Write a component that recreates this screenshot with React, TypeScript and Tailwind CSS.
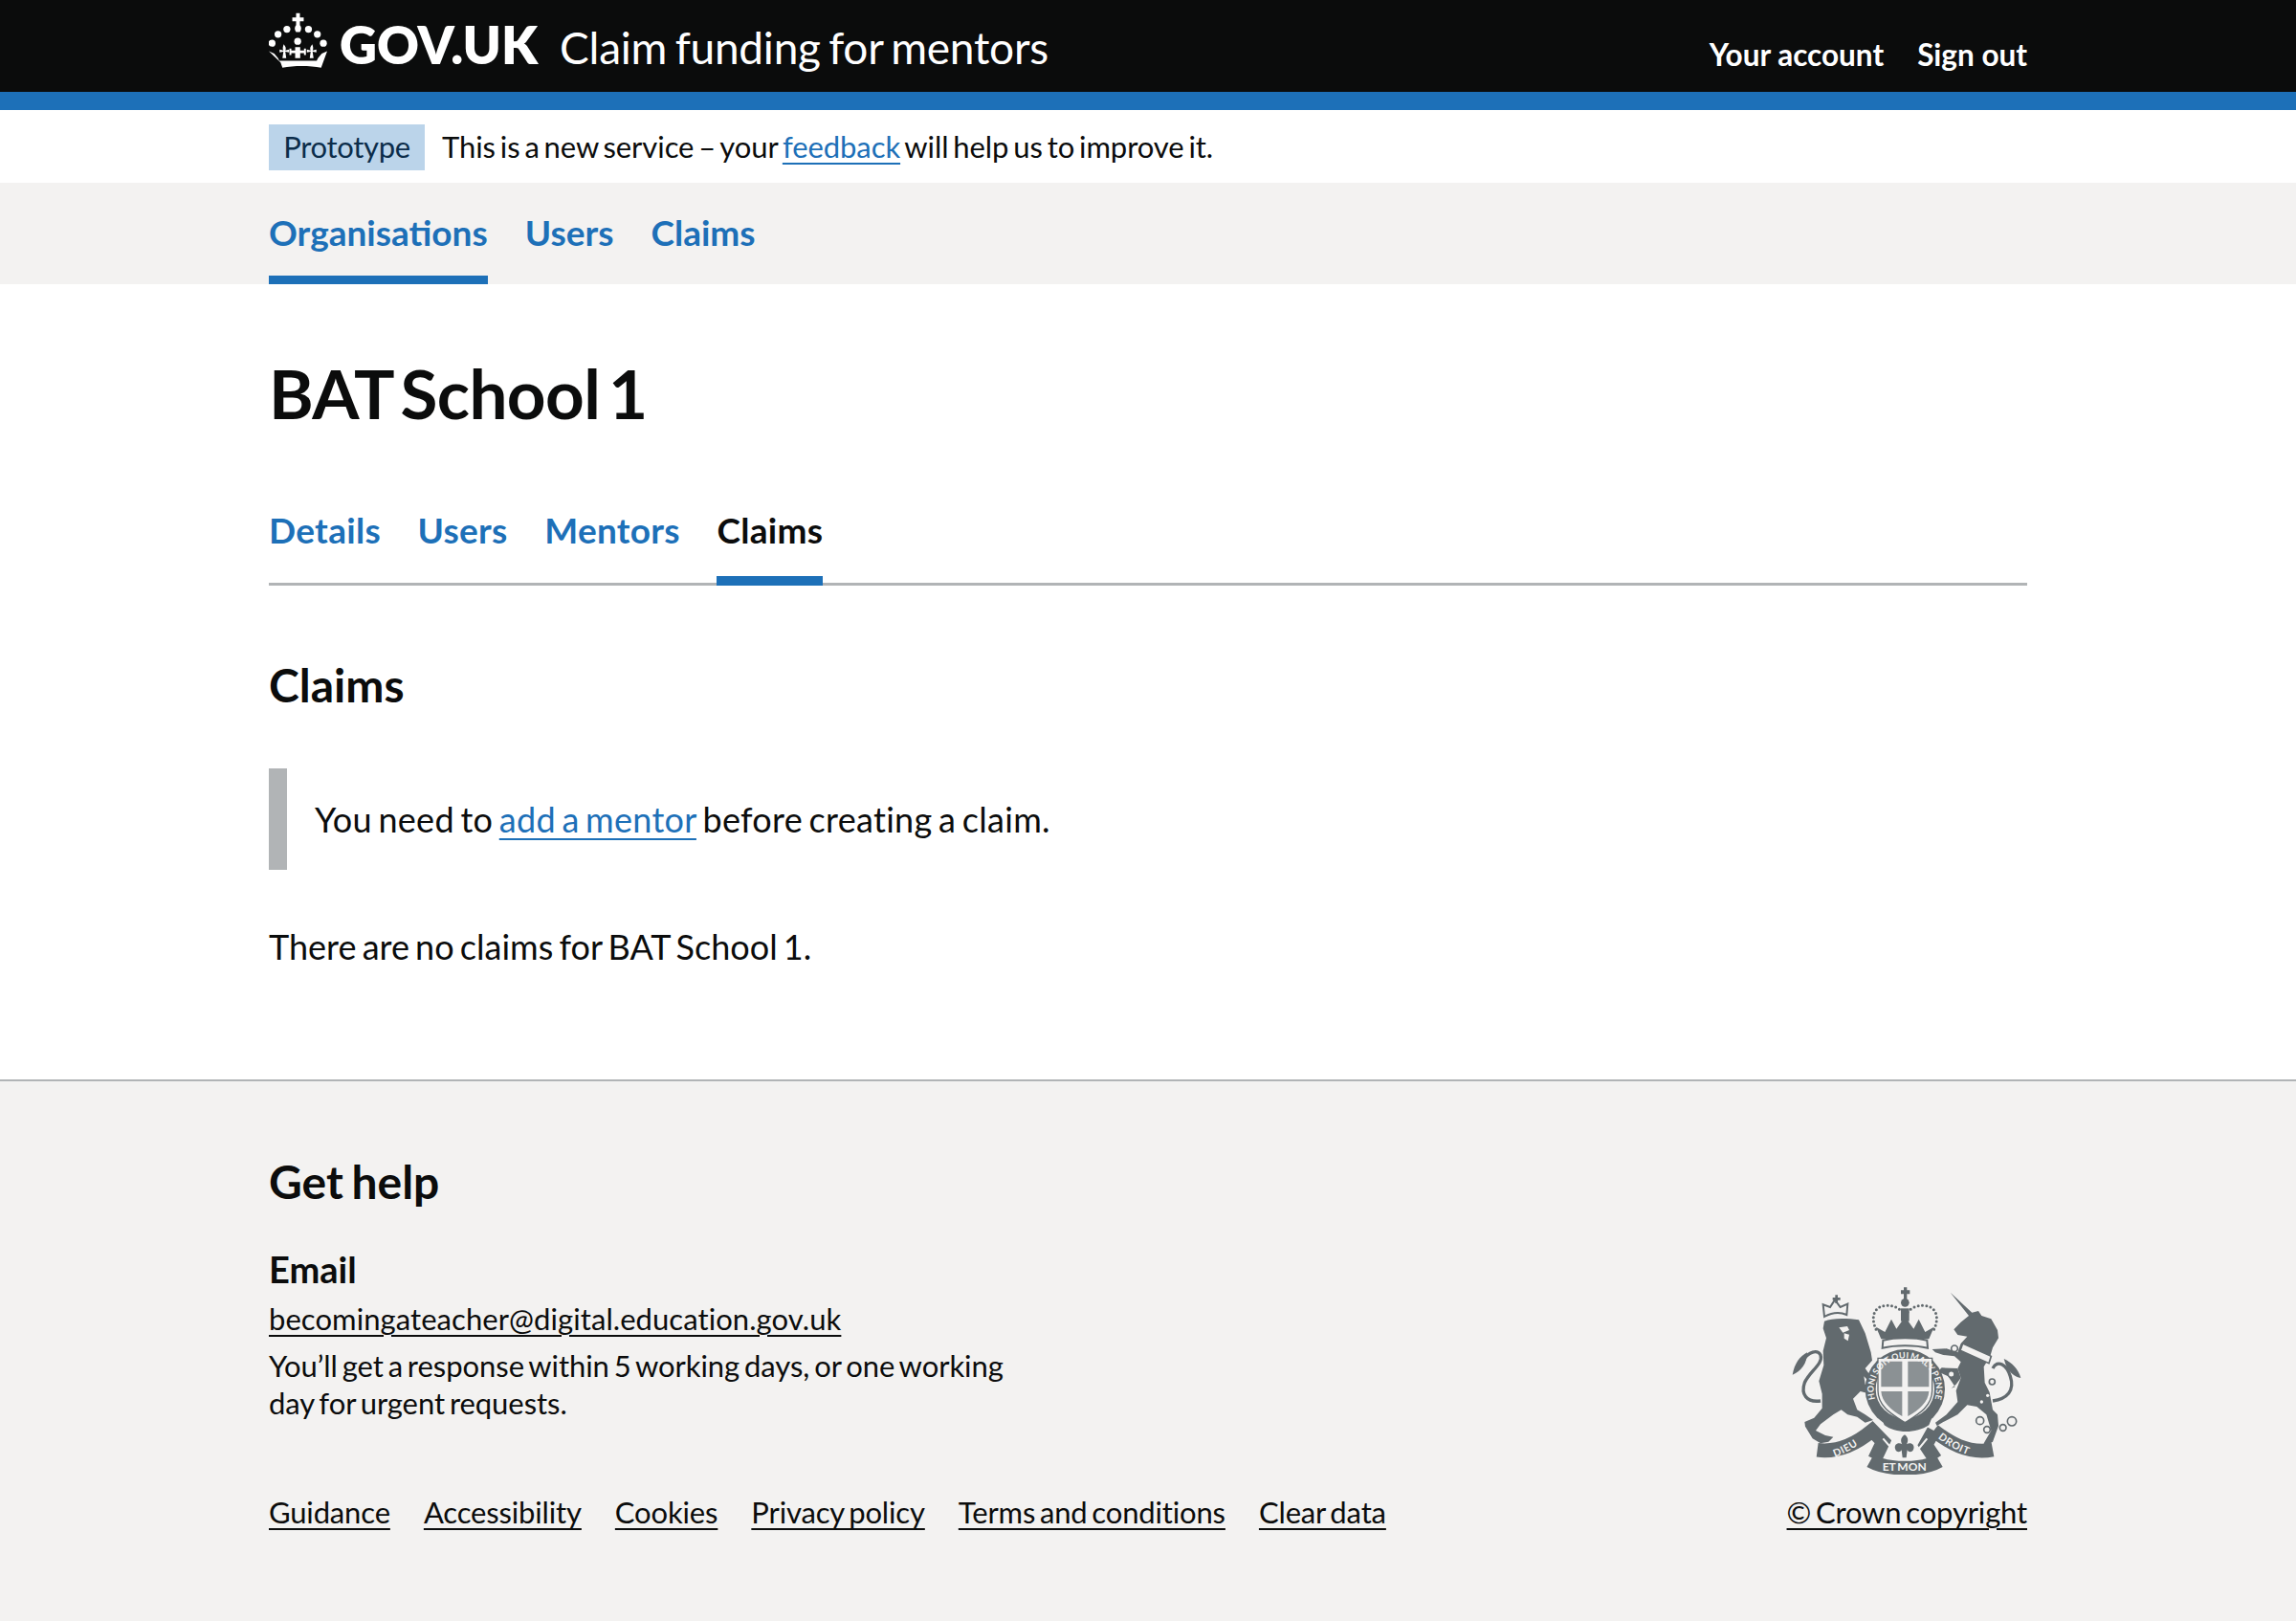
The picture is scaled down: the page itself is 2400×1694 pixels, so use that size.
import React from 'react'

const Crown = () => (
  <svg viewBox="33 38 184 175" className="w-[61px] h-[58px] shrink-0" fill="#fff">
    <path d="M119 40h12v14h12v12h-12v12c5 5 6 14 0 22h-12c-6-8-5-17 0-22V66h-12V54h12z" />
    <circle cx="90" cy="91" r="11" />
    <circle cx="158" cy="91" r="11" />
    <circle cx="62" cy="107" r="11" />
    <circle cx="186" cy="107" r="11" />
    <circle cx="43" cy="135" r="11" />
    <circle cx="205" cy="135" r="11" />
    <circle cx="124" cy="129" r="11" />
    {/* fleurs and base */}
    <path d="M80 138c7 8 8 14 5 20l12-3v9l-12-2 3 20h-12l3-20-12 2v-9l12 3c-3-6-2-12 1-20z" />
    <path d="M170 138c-7 8-8 14-5 20l-12-3v9l12-2-3 20h12l-3-20 12 2v-9l-12 3c3-6 2-12-1-20z" />
    <path d="M116 147h16v11h12v-6h6v20h-6v-6h-12v16h-16v-16h-12v6h-6v-20h6v6h12z" />
    <path d="M33 160l17 8 12 14 4 8h118l4-8 12-14 17-8-13 36c-2 6-4 10-6 16-36-7-86-7-122 0-2-6-4-10-6-16z" fillRule="evenodd" />
  </svg>
)

const RoyalArms = () => (
  <svg viewBox="70 45 720 588" className="w-[240px] h-[196px]" fill="#626a6e">
    <defs>
      <path id="garterRing" d="M348 427 A98 98 0 1 1 502 427" />
      <path id="ribbonLeft" d="M205 578 C240 565 275 545 305 518" />
      <path id="ribbonRight" d="M528 518 C560 545 600 565 648 580" />
    </defs>
    {/* lion */}
    <path d="M172 152C195 142 240 142 280 148L300 190L318 250L322 275L300 300L332 345L322 352L296 325L300 350L325 362L316 380L285 372L262 395L275 430L300 445L325 462L300 470L275 452L245 445L225 430L200 445L160 475L145 495L175 510L200 515L185 530L160 535L135 520L112 482L110 468L140 455L165 425L165 380L155 340L170 290L168 245L178 205L168 175Z" />
    <path d="M160 402C115 408 98 380 110 345C125 310 170 285 160 258C150 240 122 248 108 272" fill="none" stroke="#626a6e" strokeWidth="10" />
    <path d="M72 320C78 285 95 262 118 250C118 285 100 308 72 320Z" />
    <path d="M172 138L168 100L190 108L205 85L222 108L245 98L242 132C220 122 195 125 172 138Z" fill="none" stroke="#626a6e" strokeWidth="6" />
    <path d="M198 78h8v-8h8v8h8v8h-8v10h-8V86h-8z" />
    <path d="M218 172l26-4 6 12-20 8zM234 190l16 4-4 20-12-8z" fill="#f3f2f1" />

    {/* unicorn */}
    <path d="M567 62L635 125L655 120L665 135L695 145L715 180L718 205L700 235L692 262L672 295L675 345L690 375L700 430L715 445L718 480L700 530L675 545L672 535L695 495L680 445L650 420L620 415L590 445L545 468L525 480L520 470L555 445L590 405L585 370L600 330L590 300L600 280L580 262L545 258L520 250L510 240L555 238L590 250L600 222L620 200L590 195L578 178L600 155L625 135Z" />
    <path d="M590 300L540 298L528 310L560 325L582 358L570 362L585 350L600 330Z" />
    <path d="M606 222L695 262L688 284L598 244Z" fill="#f3f2f1" stroke="#626a6e" strokeWidth="5" />
    <path d="M700 402C745 395 770 370 755 325C745 290 715 270 700 300" fill="none" stroke="#626a6e" strokeWidth="10" />
    <path d="M788 330C770 328 745 312 735 270C760 282 780 302 788 330Z" />
    <g fill="#f3f2f1" stroke="#626a6e" strokeWidth="5">
      <circle cx="580" cy="238" r="10" />
      <circle cx="570" cy="318" r="10" />
      <circle cx="660" cy="464" r="12" />
      <circle cx="682" cy="492" r="10" />
      <circle cx="732" cy="486" r="10" />
      <circle cx="760" cy="466" r="14" />
      <circle cx="698" cy="342" r="9" />
    </g>
    <g fill="#f3f2f1">
      <circle cx="684" cy="385" r="5" />
      <circle cx="665" cy="405" r="5" />
    </g>

    {/* crown */}
    <path d="M412 55h9V46h10v9h9v12h-9v17h-10V67h-9z" />
    <circle cx="425" cy="94" r="13" />
    <path d="M334 178C315 135 330 105 366 103C390 102 410 112 420 128M516 178C535 135 520 105 484 103C460 102 440 112 430 128" fill="none" stroke="#626a6e" strokeWidth="9" strokeLinecap="round" strokeDasharray="0 13" />
    <rect x="412" y="112" width="26" height="40" />
    <path d="M334 170L362 186L382 146L398 176L425 138L452 176L468 146L488 186L516 170L500 208H350Z" />
    <path d="M356 212C395 202 455 202 494 212L496 236C456 226 394 226 354 236Z" fill="#f3f2f1" stroke="#626a6e" strokeWidth="6" />

    {/* garter and shield */}
    <circle cx="425" cy="365" r="125" />
    <circle cx="425" cy="365" r="92" fill="#f3f2f1" />
    <path d="M340 268H510V370C510 420 465 445 425 470C385 445 340 420 340 370Z" fill="#f3f2f1" stroke="#626a6e" strokeWidth="4" />
    <path d="M350 278H416V358H350ZM434 278H500V358H434ZM434 372H500C498 405 470 430 434 450ZM350 372H416V450C380 430 352 405 350 372Z" fill="#8b9194" />
    <text fontFamily="Lato, sans-serif" fontWeight="700" fontSize="27" fill="#f3f2f1" letterSpacing="0.5" textAnchor="middle">
      <textPath href="#garterRing" startOffset="50%">HONI SOIT QUI MAL Y PENSE</textPath>
    </text>
    <path d="M348 448C385 492 465 492 512 448L500 478C460 505 395 505 360 478Z" />

    {/* motto */}
    <path d="M150 556C220 565 280 530 322 495L356 530L330 585" fill="none" stroke="#626a6e" strokeWidth="44" />
    <path d="M515 495C560 530 620 570 700 555M515 495L490 540L520 585" fill="none" stroke="#626a6e" strokeWidth="44" />
    <path d="M316 590C370 620 480 620 532 590" fill="none" stroke="#626a6e" strokeWidth="44" />
    <path d="M356 520L384 552M494 520L468 552" fill="none" stroke="#f3f2f1" strokeWidth="6" />
    <text fontFamily="Lato, sans-serif" fontWeight="700" fontSize="32" fill="#f3f2f1" letterSpacing="2">
      <textPath href="#ribbonLeft">DIEU</textPath>
    </text>
    <text fontFamily="Lato, sans-serif" fontWeight="700" fontSize="32" fill="#f3f2f1" letterSpacing="2">
      <textPath href="#ribbonRight">DROIT</textPath>
    </text>
    <text x="423" y="622" fontFamily="Lato, sans-serif" fontWeight="700" fontSize="36" fill="#f3f2f1" textAnchor="middle">ET MON</text>
    <path d="M424 508C438 518 434 532 430 538C442 530 456 538 452 552C449 564 436 564 432 556L429 580H417L414 556C410 564 397 564 394 552C390 538 404 530 416 538C412 532 408 518 424 508Z" />
  </svg>
)

const ServiceNav = () => (
  <nav className="flex gap-[39px] h-[106px] text-[37px] font-bold text-[#1d70b8]">
    <a className="h-full pt-[26px] border-b-[9px] border-[#1d70b8] leading-[52px]">Organisations</a>
    <a className="pt-[26px] leading-[52px]">Users</a>
    <a className="pt-[26px] leading-[52px]">Claims</a>
  </nav>
)

const footerLinks = ['Guidance', 'Accessibility', 'Cookies', 'Privacy policy', 'Terms and conditions', 'Clear data']

export default function App() {
  return (
    <div className="font-['Lato',sans-serif] text-[#0b0c0c] bg-white min-h-[1694px] [word-spacing:-3px]">
      {/* 헤더 */}
      <header className="bg-[#0b0c0c] border-b-[19px] border-[#1d70b8] text-white">
        <div className="mx-[281px] h-[96px] flex items-start">
          <div className="flex items-start pt-[13px]">
            <Crown />
            <span className="ml-[13px] text-[54px] leading-[68px] font-extrabold">GOV.UK</span>
            <span className="ml-[23px] text-[46px] leading-[76px] -mt-[1px] tracking-[-0.25px]">Claim funding for mentors</span>
          </div>
          <div className="ml-auto flex gap-[35px] text-[31.5px] font-bold pt-[38px] leading-[38px] [word-spacing:0px]">
            <a>Your account</a>
            <a>Sign out</a>
          </div>
        </div>
      </header>

      {/* phase banner */}
      <div className="h-[76px] mx-[281px] flex items-center pt-[1px] text-[31px]">
        <span className="bg-[#bbd4ea] text-[#0c2d4a] w-[163px] h-[48px] flex items-center justify-center tracking-[-0.3px]">Prototype</span>
        <p className="ml-[18px] tracking-[-0.07px]">
          This is a new service – your <a className="text-[#1d70b8] underline underline-offset-[5px] decoration-2">feedback</a> will help us to improve it.
        </p>
      </div>

      <div className="bg-[#f3f2f1]">
        <div className="mx-[281px]">
          <ServiceNav />
        </div>
      </div>

      <main className="mx-[281px] h-[831px]">
        <h1 className="pt-[65px] text-[71px] leading-[98px] font-bold tracking-[-0.6px] [word-spacing:-8px]">BAT School 1</h1>

        <div className="mt-[69px] h-[83px] flex gap-[38.5px] border-b-[3px] border-[#b1b4b6] text-[37px] tracking-[0.3px] font-bold text-[#1d70b8]">
          <a className="leading-[52px] -mt-[1px]">Details</a>
          <a className="leading-[52px] -mt-[1px]">Users</a>
          <a className="leading-[52px] -mt-[1px]">Mentors</a>
          <a className="h-[84px] text-[#0b0c0c] leading-[52px] -mt-[1px] border-b-[10px] border-[#1d70b8]">Claims</a>
        </div>

        <h2 className="mt-[74px] text-[48px] leading-[60px] font-bold">Claims</h2>

        <div className="mt-[57px] h-[106px] flex items-center border-l-[19px] border-[#b1b4b6] pl-[29px] text-[36px]">
          <p className="tracking-[0.3px] -mt-[1px]">
            You need to <a className="text-[#1d70b8] underline underline-offset-[6px] decoration-2">add a mentor</a> before creating a claim.
          </p>
        </div>

        <p className="mt-[56px] text-[36px] leading-[48px]">There are no claims for BAT School 1.</p>
      </main>

      {/* 푸터 */}
      <footer className="bg-[#f3f2f1] border-t-[2px] border-[#b1b4b6] h-[566px]">
        <div className="mx-[281px] pt-[75px]">
          <div className="flex justify-between">
            <div>
              <h2 className="text-[48px] leading-[60px] font-bold">Get help</h2>
              <h3 className="mt-[38px] text-[38px] leading-[46px] font-bold">Email</h3>
              <a className="block mt-[9px] text-[31px] leading-[40px] tracking-[0.07px] underline underline-offset-[5px] decoration-2">becomingateacher@digital.education.gov.uk</a>
              <p className="mt-[10px] w-[790px] text-[31px] leading-[39px] tracking-[-0.05px]">You’ll get a response within 5 working days, or one working day for urgent requests.</p>
            </div>
            <div className="pt-[140px] pr-[6px]">
              <RoyalArms />
            </div>
          </div>
          <div className="mt-[19px] flex justify-between text-[31px] leading-[40px] tracking-[-0.15px]">
            <div className="flex gap-[35px]">
              {footerLinks.map(l => (
                <a key={l} className="underline underline-offset-[5px] decoration-2">{l}</a>
              ))}
            </div>
            <a className="underline underline-offset-[5px] decoration-2">© Crown copyright</a>
          </div>
        </div>
      </footer>
    </div>
  )
}
